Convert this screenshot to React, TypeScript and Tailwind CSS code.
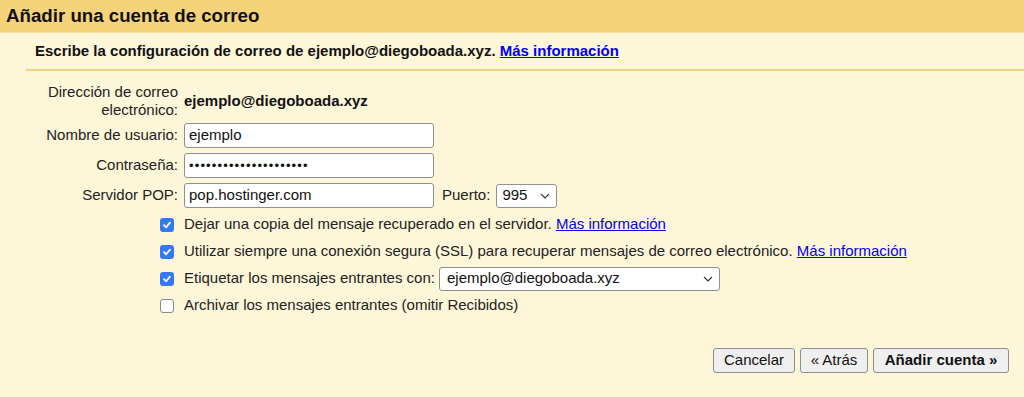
import React from "react";

const Check = ({ checked }: { checked: boolean }) =>
  checked ? (
    <span className="flex h-[14px] w-[14px] items-center justify-center rounded-[3px] bg-[#3478f6]">
      <svg width="10" height="10" viewBox="0 0 10 10">
        <path d="M2 5.2 L4.1 7.3 L8 2.6" fill="none" stroke="white" strokeWidth="1.8" strokeLinecap="round" strokeLinejoin="round" />
      </svg>
    </span>
  ) : (
    <span className="block h-[14px] w-[14px] rounded-[3px] border border-[#8a8a8a] bg-white" />
  );

const Chevron = () => (
  <svg width="10" height="6" viewBox="0 0 10 6">
    <path d="M1 1 L5 5 L9 1" fill="none" stroke="#333" strokeWidth="1.1" />
  </svg>
);

const TextBox = ({ children }: { children: React.ReactNode }) => (
  <div className="flex h-[25px] w-[250px] items-center rounded-[3px] border border-[#8f8f8f] bg-white pl-[4px] text-[15px] text-[#111]">
    {children}
  </div>
);

export default function App() {
  const link = "text-[#0000ee] underline";
  return (
    <div className="h-[397px] w-[1024px] bg-[#fef6d9] text-[15px] text-[#222]" style={{ fontFamily: '"Liberation Sans", Arial, sans-serif' }}>
      <div className="flex h-[33px] items-center border-b border-[#f8df9c] bg-[#f5d37a] pl-[6px] text-[18.7px] font-bold text-[#111]">
        Añadir una cuenta de correo
      </div>
      <div className="ml-[26px] flex h-[38px] items-center border-b-2 border-[#f5d37a] pl-[9px] font-bold text-[#111]">
        Escribe la configuración de correo de ejemplo@diegoboada.xyz.&nbsp;<span className={link}>Más información</span>
      </div>
      <div className="grid grid-cols-[178px_auto] gap-x-[6px] pt-[12px]">
        <div className="text-right leading-[18px]">
          Dirección de correo
          <br />
          electrónico:
        </div>
        <div className="flex items-center font-bold text-[#111]">ejemplo@diegoboada.xyz</div>

        <div className="mt-[4px] flex items-center justify-end">Nombre de usuario:</div>
        <div className="mt-[4px]">
          <TextBox>ejemplo</TextBox>
        </div>

        <div className="mt-[5px] flex items-center justify-end">Contraseña:</div>
        <div className="mt-[5px]">
          <TextBox>
            <span className="text-[13px] tracking-[1.15px]">{"•".repeat(21)}</span>
          </TextBox>
        </div>

        <div className="mt-[5px] flex items-center justify-end">Servidor POP:</div>
        <div className="mt-[5px] flex items-center">
          <TextBox>pop.hostinger.com</TextBox>
          <span className="ml-[8px] mr-[6px]">Puerto:</span>
          <div className="flex h-[24px] w-[61px] items-center justify-between rounded-[3px] border border-[#8f8f8f] bg-white pl-[5px] pr-[6px] text-[#111]">
            <span>995</span>
            <Chevron />
          </div>
        </div>

        <div className="mt-[3px] flex h-[27px] items-center justify-end pr-[4px]">
          <Check checked />
        </div>
        <div className="mt-[3px] flex h-[27px] items-center">
          Dejar una copia del mensaje recuperado en el servidor.&nbsp;<span className={link}>Más información</span>
        </div>

        <div className="flex h-[27px] items-center justify-end pr-[4px]">
          <Check checked />
        </div>
        <div className="flex h-[27px] items-center">
          Utilizar siempre una conexión segura (SSL) para recuperar mensajes de correo electrónico.&nbsp;
          <span className={link}>Más información</span>
        </div>

        <div className="flex h-[27px] items-center justify-end pr-[4px]">
          <Check checked />
        </div>
        <div className="flex h-[27px] items-center">
          <span className="mr-[4px]">Etiquetar los mensajes entrantes con:</span>
          <div className="flex h-[24px] w-[281px] items-center justify-between rounded-[3px] border border-[#8f8f8f] bg-white pl-[7px] pr-[6px] text-[#111]">
            <span>ejemplo@diegoboada.xyz</span>
            <Chevron />
          </div>
        </div>

        <div className="flex h-[27px] items-center justify-end pr-[4px]">
          <Check checked={false} />
        </div>
        <div className="flex h-[27px] items-center">Archivar los mensajes entrantes (omitir Recibidos)</div>
      </div>
      <div className="mt-[29px] flex justify-end gap-[5px] pr-[15px]">
        <button className="h-[25px] w-[82px] rounded-[3px] border border-[#8f8f8f] bg-[#efefef] text-[15px] text-[#111]">Cancelar</button>
        <button className="h-[25px] w-[68px] rounded-[3px] border border-[#8f8f8f] bg-[#efefef] text-[15px] text-[#111]">« Atrás</button>
        <button className="h-[25px] w-[136px] rounded-[3px] border border-[#8f8f8f] bg-[#efefef] text-[15px] font-bold text-[#111]">Añadir cuenta »</button>
      </div>
    </div>
  );
}
